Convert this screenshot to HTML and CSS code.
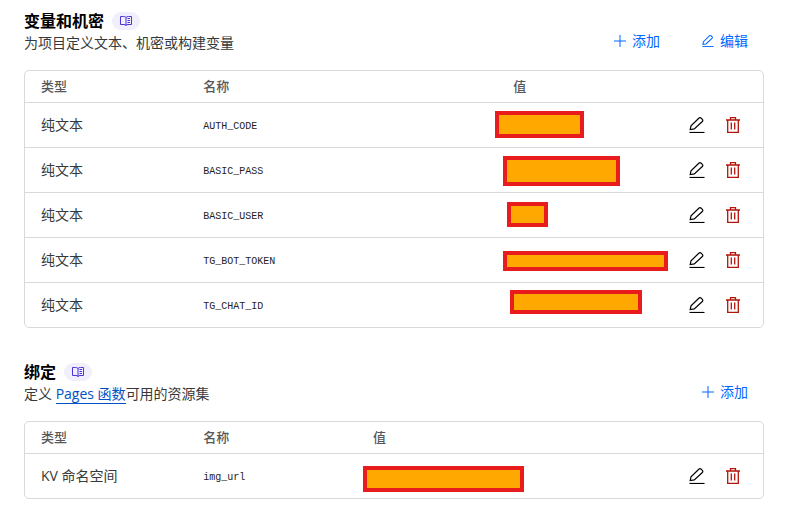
FILE: index.html
```html
<!DOCTYPE html>
<html lang="zh-CN">
<head>
<meta charset="utf-8">
<meta name="viewport" content="width=device-width, initial-scale=1">
<title>变量和机密</title>
<link rel="stylesheet" href="styles.css">
</head>
<body>
<svg class="sprite" aria-hidden="true">
  <symbol id="i-book" viewBox="0 0 12 12"><path d="M6 2.500V11M6 2.500C5.400 1.700 4.500 1.500 3.500 1.500H.5v8h3.500c1 0 1.600.4 2 1 .4-.6 1-1 2-1h3.500v-8h-3C7.500 1.500 6.600 1.700 6 2.500M7.500 3.500H10M7.500 5.500H10M7.500 7.500H10"/></symbol>
  <symbol id="i-plus" viewBox="0 0 12 12"><path d="M6 0v12M0 6h12"/></symbol>
  <symbol id="i-pencil" viewBox="0 0 16 16"><path d="M1.200 12.600 2 8.900 9.800 1.200Q11 .2 12.200 1.200L13.300 2.300Q14.300 3.400 13.300 4.500L5.300 11.900Z"/><path d="M.5 15.500h15"/></symbol>
  <symbol id="i-trash" viewBox="0 0 14 16"><path d="M0 3h14M4.500 3V.7h5V3M1.700 3v12.300h10.600V3M5.300 5.500v7M8.700 5.500v7"/></symbol>
</svg>
<main class="page">
  <section class="section">
    <header class="section-head">
      <div class="intro">
        <h2 class="title">变量和机密 <a class="docs" href="#" aria-label="文档"><svg class="icon-s"><use href="#i-book"/></svg></a></h2>
        <p class="desc">为项目定义文本、机密或构建变量</p>
      </div>
      <div class="tools">
        <button class="tool" type="button"><svg class="icon-s"><use href="#i-plus"/></svg>添加</button>
        <button class="tool" type="button"><svg class="icon-s tool-pencil"><use href="#i-pencil"/></svg>编辑</button>
      </div>
    </header>
    <div class="card">
      <table class="table">
        <colgroup><col class="col-type"><col class="col-name-wide"><col><col class="col-actions"></colgroup>
        <thead><tr><th>类型</th><th>名称</th><th>值</th><td></td></tr></thead>
        <tbody>
          <tr><td>纯文本</td><td><code>AUTH_CODE</code></td><td class="value"><span class="mask mask-auth"></span></td>
            <td><div class="actions"><button type="button" class="act" aria-label="编辑"><svg class="icon-pencil"><use href="#i-pencil"/></svg></button><button type="button" class="act danger" aria-label="删除"><svg class="icon-trash"><use href="#i-trash"/></svg></button></div></td></tr>
          <tr><td>纯文本</td><td><code>BASIC_PASS</code></td><td class="value"><span class="mask mask-pass"></span></td>
            <td><div class="actions"><button type="button" class="act" aria-label="编辑"><svg class="icon-pencil"><use href="#i-pencil"/></svg></button><button type="button" class="act danger" aria-label="删除"><svg class="icon-trash"><use href="#i-trash"/></svg></button></div></td></tr>
          <tr><td>纯文本</td><td><code>BASIC_USER</code></td><td class="value"><span class="mask mask-user"></span></td>
            <td><div class="actions"><button type="button" class="act" aria-label="编辑"><svg class="icon-pencil"><use href="#i-pencil"/></svg></button><button type="button" class="act danger" aria-label="删除"><svg class="icon-trash"><use href="#i-trash"/></svg></button></div></td></tr>
          <tr><td>纯文本</td><td><code>TG_BOT_TOKEN</code></td><td class="value"><span class="mask mask-token"></span></td>
            <td><div class="actions"><button type="button" class="act" aria-label="编辑"><svg class="icon-pencil"><use href="#i-pencil"/></svg></button><button type="button" class="act danger" aria-label="删除"><svg class="icon-trash"><use href="#i-trash"/></svg></button></div></td></tr>
          <tr><td>纯文本</td><td><code>TG_CHAT_ID</code></td><td class="value"><span class="mask mask-chat"></span></td>
            <td><div class="actions"><button type="button" class="act" aria-label="编辑"><svg class="icon-pencil"><use href="#i-pencil"/></svg></button><button type="button" class="act danger" aria-label="删除"><svg class="icon-trash"><use href="#i-trash"/></svg></button></div></td></tr>
        </tbody>
      </table>
    </div>
  </section>
  <section class="section">
    <header class="section-head">
      <div class="intro">
        <h2 class="title">绑定 <a class="docs" href="#" aria-label="文档"><svg class="icon-s"><use href="#i-book"/></svg></a></h2>
        <p class="desc">定义 <a class="link" href="#">Pages 函数</a>可用的资源集</p>
      </div>
      <div class="tools">
        <button class="tool" type="button"><svg class="icon-s"><use href="#i-plus"/></svg>添加</button>
      </div>
    </header>
    <div class="card">
      <table class="table">
        <colgroup><col class="col-type"><col class="col-name"><col><col class="col-actions"></colgroup>
        <thead><tr><th>类型</th><th>名称</th><th>值</th><td></td></tr></thead>
        <tbody>
          <tr><td>KV 命名空间</td><td><code>img_url</code></td><td class="value"><span class="mask mask-kv"></span></td>
            <td><div class="actions"><button type="button" class="act" aria-label="编辑"><svg class="icon-pencil"><use href="#i-pencil"/></svg></button><button type="button" class="act danger" aria-label="删除"><svg class="icon-trash"><use href="#i-trash"/></svg></button></div></td></tr>
        </tbody>
      </table>
    </div>
  </section>
</main>
</body>
</html>
```
FILE: styles.css
```css
* { box-sizing: border-box; }

body {
  margin: 0;
  background: #fff;
  color: #36393a;
  font: 14px/20px "Open Sans", "Noto Sans CJK SC", sans-serif;
}

.sprite { position: absolute; width: 0; height: 0; }

svg { fill: none; stroke: currentColor; }

.page {
  display: flex;
  flex-direction: column;
  gap: 32px;
  padding: 9px 23px 14px 24px;
}

.section-head {
  display: flex;
  justify-content: space-between;
  align-items: flex-end;
  padding-right: 16px;
  margin-bottom: 17px;
}

.title {
  display: flex;
  align-items: center;
  gap: 8px;
  margin: 0;
  font-size: 16px;
  line-height: 24px;
  font-weight: 700;
  color: #000;
}

.docs {
  display: flex;
  align-items: center;
  justify-content: center;
  width: 28px;
  height: 18px;
  border-radius: 9px;
  background: #f1eefe;
  color: #4a35d8;
}

.desc { margin: 0; }

.link {
  color: #0051c3;
  text-decoration: none;
  border-bottom: 1px solid #0051c3;
}

.tools { display: flex; gap: 42px; }

.tool {
  display: flex;
  align-items: center;
  gap: 6px;
  padding: 0 0 2px;
  border: 0;
  background: none;
  color: #0066ff;
  font: inherit;
}

.icon-s { width: 12px; height: 12px; }

.tool-pencil { stroke-width: 1.4; }

.card {
  border: 1px solid #d9d9d9;
  border-radius: 5px;
}

.table {
  width: 100%;
  table-layout: fixed;
  border-spacing: 0;
}

.col-type { width: 22%; }
.col-name-wide { width: 42%; }
.col-name { width: 23%; }
.col-actions { width: 90px; }

.table th {
  height: 31px;
  padding: 0 16px 2px;
  text-align: left;
  font-size: 13px;
  font-weight: 500;
  color: #55585a;
}

.table td { padding: 0 16px; }

.table tbody td {
  height: 45px;
  border-top: 1px solid #d9d9d9;
}

.table code {
  font: 10px/20px "Liberation Mono", monospace;
  color: #222;
}

.table .value { position: relative; }

/* Solid blocks laid over the private values */
.mask {
  position: absolute;
  border: 4px solid #e81c1c;
  background: #ffa900;
}

.mask-auth { left: -2px; top: 8px; width: 89px; height: 27px; }
.mask-pass { left: 6px; top: 8px; width: 117px; height: 30px; }
.mask-user { left: 10px; top: 9px; width: 41px; height: 25px; }
.mask-token { left: 6px; top: 13px; width: 165px; height: 20px; }
.mask-chat { left: 13px; top: 7px; width: 132px; height: 24px; }
.mask-kv { left: 6px; top: 12px; width: 161px; height: 26px; }

.actions {
  display: flex;
  align-items: center;
  justify-content: space-between;
  margin-right: 7px;
}

.act {
  display: flex;
  padding: 0;
  border: 0;
  background: none;
  color: #000;
}

.danger { color: #b3140b; }

.icon-pencil { width: 16px; height: 16px; stroke-width: 1.2; }
.icon-trash { width: 14px; height: 16px; stroke-width: 1.3; }
```
